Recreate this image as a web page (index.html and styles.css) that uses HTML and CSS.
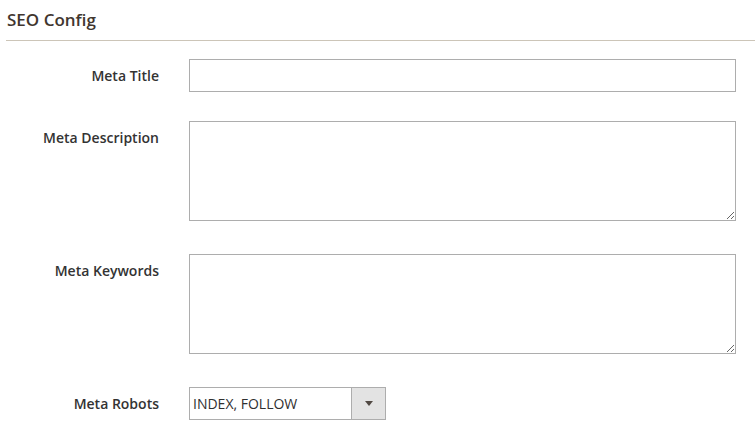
FILE: index.html
```html
<!DOCTYPE html>
<html>
<head>
<meta charset="utf-8">
<link rel="stylesheet" href="styles.css">
</head>
<body>
<div class="section">
  <div class="section-title">SEO Config</div>
  <div class="form">
    <div class="row row-title">
      <label class="lbl">Meta Title</label>
      <div class="ctrl"><input class="input" type="text"></div>
    </div>
    <div class="row row-desc">
      <label class="lbl lbl-top">Meta Description</label>
      <div class="ctrl"><textarea class="textarea"></textarea></div>
    </div>
    <div class="row row-kw">
      <label class="lbl lbl-top">Meta Keywords</label>
      <div class="ctrl"><textarea class="textarea"></textarea></div>
    </div>
    <div class="row row-robots">
      <label class="lbl">Meta Robots</label>
      <div class="ctrl">
        <div class="select">
          <span class="select-value">INDEX, FOLLOW</span>
          <span class="select-btn"><span class="arrow"></span></span>
        </div>
      </div>
    </div>
  </div>
</div>
</body>
</html>
```

FILE: styles.css
```css
* { box-sizing: border-box; }
html, body {
  margin: 0;
  padding: 0;
  background: #ffffff;
  font-family: "Open Sans", "Liberation Sans", sans-serif;
  color: #303030;
}
.section {
  width: 755px;
}
.section-title {
  font-size: 17px;
  font-weight: 600;
  color: #41362f;
  line-height: 24px;
  padding: 8px 0 8px 1px;
  border-bottom: 1px solid #ccc5b8;
  margin-left: 6px;
}
.form {
  padding-top: 18px;
}
.row {
  display: flex;
  align-items: flex-start;
}
.row-desc { margin-top: 29px; }
.row-kw { margin-top: 33px; }
.row-robots { margin-top: 33px; }
.lbl {
  width: 159px;
  text-align: right;
  font-size: 14px;
  font-weight: 600;
  line-height: 33px;
  color: #333333;
  flex: none;
}
.lbl-top {
  line-height: 20px;
  padding-top: 7px;
}
.ctrl {
  margin-left: 30px;
  flex: none;
}
.input {
  display: block;
  width: 547px;
  height: 33px;
  border: 1px solid #adadad;
  border-radius: 0;
  padding: 0 8px;
  font-family: inherit;
  font-size: 14px;
  outline: none;
  background: #fff;
}
.textarea {
  display: block;
  width: 547px;
  height: 100px;
  border: 1px solid #adadad;
  border-radius: 0;
  padding: 6px 8px;
  margin: 0;
  font-family: inherit;
  font-size: 14px;
  resize: vertical;
  outline: none;
  background: #fff;
}
.select {
  display: flex;
  width: 197px;
  height: 33px;
  border: 1px solid #adadad;
  background: #fff;
}
.select-value {
  flex: 1;
  font-size: 14px;
  line-height: 31px;
  padding-left: 3px;
  color: #303030;
}
.select-btn {
  width: 34px;
  border-left: 1px solid #adadad;
  background: #e3e3e3;
  display: flex;
  align-items: center;
  justify-content: center;
}
.arrow {
  width: 0;
  height: 0;
  border-left: 4px solid transparent;
  border-right: 4px solid transparent;
  border-top: 5px solid #514943;
  margin-left: 1px;
}
```
